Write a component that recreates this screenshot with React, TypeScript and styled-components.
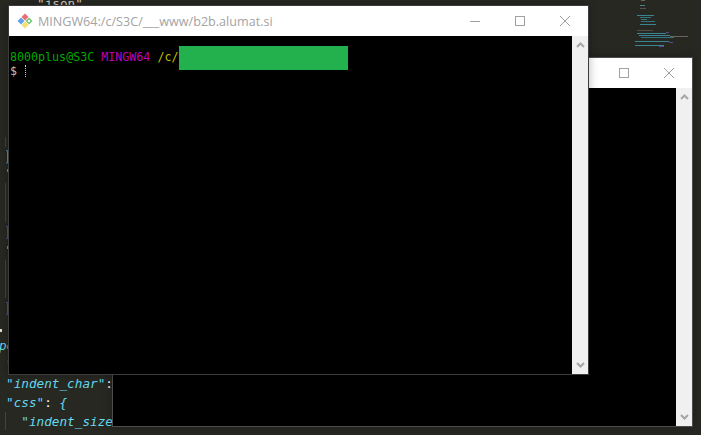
import React from "react";
import styled, { createGlobalStyle } from "styled-components";

const GlobalStyle = createGlobalStyle`
  html, body {
    margin: 0;
    padding: 0;
    background: #272822;
    overflow: hidden;
  }
`;

const Desktop = styled.div`
  position: relative;
  width: 701px;
  height: 435px;
  overflow: hidden;
  background: #272822;
`;

const Editor = styled.div`
  display: flex;
  flex-direction: column;
  justify-content: space-between;
  height: 100%;
  font: italic 12.7px/19px "DejaVu Sans Mono", monospace;
  color: #66d9ef;
  white-space: pre;
`;

const TopLine = styled.div`
  margin: -6px 0 0 37px;
  color: #cfcfc2;
  font-style: normal;
`;

const BottomLines = styled.div`
  display: flex;
  flex-direction: column;
  padding: 0 0 4px 6px;
`;

const Punct = styled.span`
  color: #f8f8f2;
  font-style: normal;
`;

const CutLine = styled.div`
  margin-left: -7px;
`;

const EditorMarks = styled.svg`
  position: absolute;
  left: 0;
  top: 0;
`;

const Minimap = styled.svg`
  position: absolute;
  left: 630px;
  top: 0;
`;

const Window = styled.div<{ $left: number; $top: number; $edge: string }>`
  position: absolute;
  left: ${(p) => p.$left}px;
  top: ${(p) => p.$top}px;
  width: 581px;
  height: 370px;
  box-sizing: border-box;
  display: flex;
  flex-direction: column;
  border: 1px solid ${(p) => p.$edge};
  box-shadow: 0 0 9px rgba(0, 0, 0, 0.28);
`;

const TitleBar = styled.div`
  flex: none;
  height: 30px;
  padding-right: 1px;
  display: flex;
  align-items: center;
  background: #fff;
`;

const AppLogo = styled.svg`
  flex: none;
  margin: 0 4px 0 8px;
`;

const Title = styled.div`
  flex: 1;
  font: 12.6px "Open Sans", sans-serif;
  color: #a3a3a3;
  white-space: nowrap;
  padding-left: 1px;
`;

const WinButton = styled.div`
  flex: none;
  width: 45px;
  height: 30px;
  display: flex;
  align-items: center;
  justify-content: center;
`;

const WindowBody = styled.div`
  flex: 1;
  min-height: 0;
  display: flex;
`;

const Terminal = styled.div`
  flex: 1;
  background: #000;
  padding-top: 14px;
  font: 11.67px/14px "DejaVu Sans Mono", monospace;
  white-space: pre;
  color: #bfbfbf;
`;

const TermLine = styled.div`
  display: flex;
  align-items: center;
  padding-left: 1px;
`;

const Ansi = styled.span<{ $color: string }>`
  color: ${(p) => p.$color};
`;

const Redaction = styled.div`
  width: 169px;
  height: 24px;
  margin: -10px 0 0 1px;
  background: #23b14d;
  transform: translateY(6px);
`;

const Caret = styled.span`
  display: inline-block;
  width: 0;
  height: 12px;
  margin-left: 8px;
  border-left: 1px dotted #c8c8c8;
`;

const Scrollbar = styled.div`
  flex: none;
  width: 16px;
  display: flex;
  flex-direction: column;
  justify-content: space-between;
  align-items: center;
  padding: 6px 0;
  background: #f0f0f0;
`;

const Chevron = ({ down }: { down?: boolean }) => (
  <svg width="9" height="6" viewBox="0 0 9 6">
    <path
      d={down ? "M1 1l3.5 3.5L8 1" : "M1 5l3.5-3.5L8 5"}
      fill="none"
      stroke="#a6a6a6"
      strokeWidth="2"
    />
  </svg>
);

const GitLogo = () => (
  <AppLogo width="16" height="16" viewBox="0 0 16 16">
    <path d="M8 0.5L11.5 4 8 7.5 4.5 4z" fill="#ea6f73" />
    <path d="M12 4.5L15.5 8 12 11.5 8.5 8z" fill="#74c474" />
    <path d="M8 8.5L11.5 12 8 15.5 4.5 12z" fill="#f5de72" />
    <path d="M4 4.5L7.5 8 4 11.5 0.5 8z" fill="#62a2ec" />
    <circle cx="12" cy="8" r="1.2" fill="#fff" />
  </AppLogo>
);

const MinimizeIcon = () => (
  <svg width="10" height="10" viewBox="0 0 10 10">
    <path d="M0 5.5h10" stroke="#a0a0a0" strokeWidth="1" />
  </svg>
);

const MaximizeIcon = () => (
  <svg width="10" height="10" viewBox="0 0 10 10">
    <rect x="0.5" y="0.5" width="9" height="9" fill="none" stroke="#a0a0a0" strokeWidth="1" />
  </svg>
);

const CloseIcon = () => (
  <svg width="10" height="10" viewBox="0 0 10 10">
    <path d="M0 0l10 10M10 0L0 10" stroke="#a0a0a0" strokeWidth="1" />
  </svg>
);

const TerminalWindow = ({
  left,
  top,
  edge,
  children,
}: {
  left: number;
  top: number;
  edge: string;
  children?: React.ReactNode;
}) => (
  <Window $left={left} $top={top} $edge={edge}>
    <TitleBar>
      <GitLogo />
      <Title>MINGW64:/c/S3C/___www/b2b.alumat.si</Title>
      <WinButton>
        <MinimizeIcon />
      </WinButton>
      <WinButton>
        <MaximizeIcon />
      </WinButton>
      <WinButton>
        <CloseIcon />
      </WinButton>
    </TitleBar>
    <WindowBody>
      <Terminal>{children}</Terminal>
      <Scrollbar>
        <Chevron />
        <Chevron down />
      </Scrollbar>
    </WindowBody>
  </Window>
);

// x, y, width, colour of each minimap stroke
const minimapRows: [number, number, number, string][] = [
  [11, 0, 4, "#66665f"],
  [10, 5, 5, "#4a7f8a"],
  [10, 8, 6, "#55554f"],
  [7, 15, 17, "#3a8392"],
  [10, 17, 11, "#35727f"],
  [11, 19, 6, "#35727f"],
  [11, 21, 14, "#35727f"],
  [10, 24, 16, "#3a8392"],
  [7, 30, 16, "#4d4d46"],
  [7, 33, 29, "#3a8392"],
  [36, 32, 3, "#5a4a90"],
  [9, 35, 31, "#3a8392"],
  [40, 36, 18, "#66665f"],
  [11, 37, 33, "#35727f"],
  [5, 41, 34, "#3a8392"],
  [39, 42, 4, "#5a4a90"],
  [5, 45, 29, "#3a8392"],
  [29, 46, 5, "#5a4a90"],
];

export default function App() {
  return (
    <Desktop>
      <GlobalStyle />
      <Editor>
        <TopLine>"json"</TopLine>
        <BottomLines>
          <CutLine>pe</CutLine>
          <div>"</div>
          <div>
            "indent_char"<Punct>:</Punct>
          </div>
          <div>
            "css"<Punct>: </Punct>
            {"{"}
          </div>
          <div>{'  "indent_size'}</div>
        </BottomLines>
      </Editor>
      <EditorMarks width="12" height="435" viewBox="0 0 12 435">
        <path d="M5.5 137v10M5.5 183v39M5.5 260v38M5.5 412v18" stroke="#44443e" />
        <path d="M6 150.5h1.5v12.5H6" fill="none" stroke="#3a8fd0" />
        <path d="M6 226.5h1.5v12H6M6 302.5h1.5v12H6" fill="none" stroke="#3a50b8" />
        <path d="M7 169h1v3H7zM7 246h1v3H7z" fill="#3fa0b8" />
        <path d="M0 329h2v3H0z" fill="#e8d8d0" />
      </EditorMarks>
      <Minimap width="62" height="50" viewBox="0 0 62 50">
        {minimapRows.map(([x, y, w, color], i) => (
          <rect key={i} x={x} y={y} width={w} height={1} fill={color} />
        ))}
      </Minimap>
      <TerminalWindow left={112} top={57} edge="#4d4d4d" />
      <TerminalWindow left={8} top={5} edge="#3c3c3c">
        <TermLine>
          <Ansi $color="#00a800">8000plus@S3C </Ansi>
          <Ansi $color="#bf00bf">MINGW64 </Ansi>
          <Ansi $color="#bfbf00">/c/</Ansi>
          <Redaction />
        </TermLine>
        <TermLine>
          <Ansi $color="#bfbfbf">$</Ansi>
          <Caret />
        </TermLine>
      </TerminalWindow>
    </Desktop>
  );
}
